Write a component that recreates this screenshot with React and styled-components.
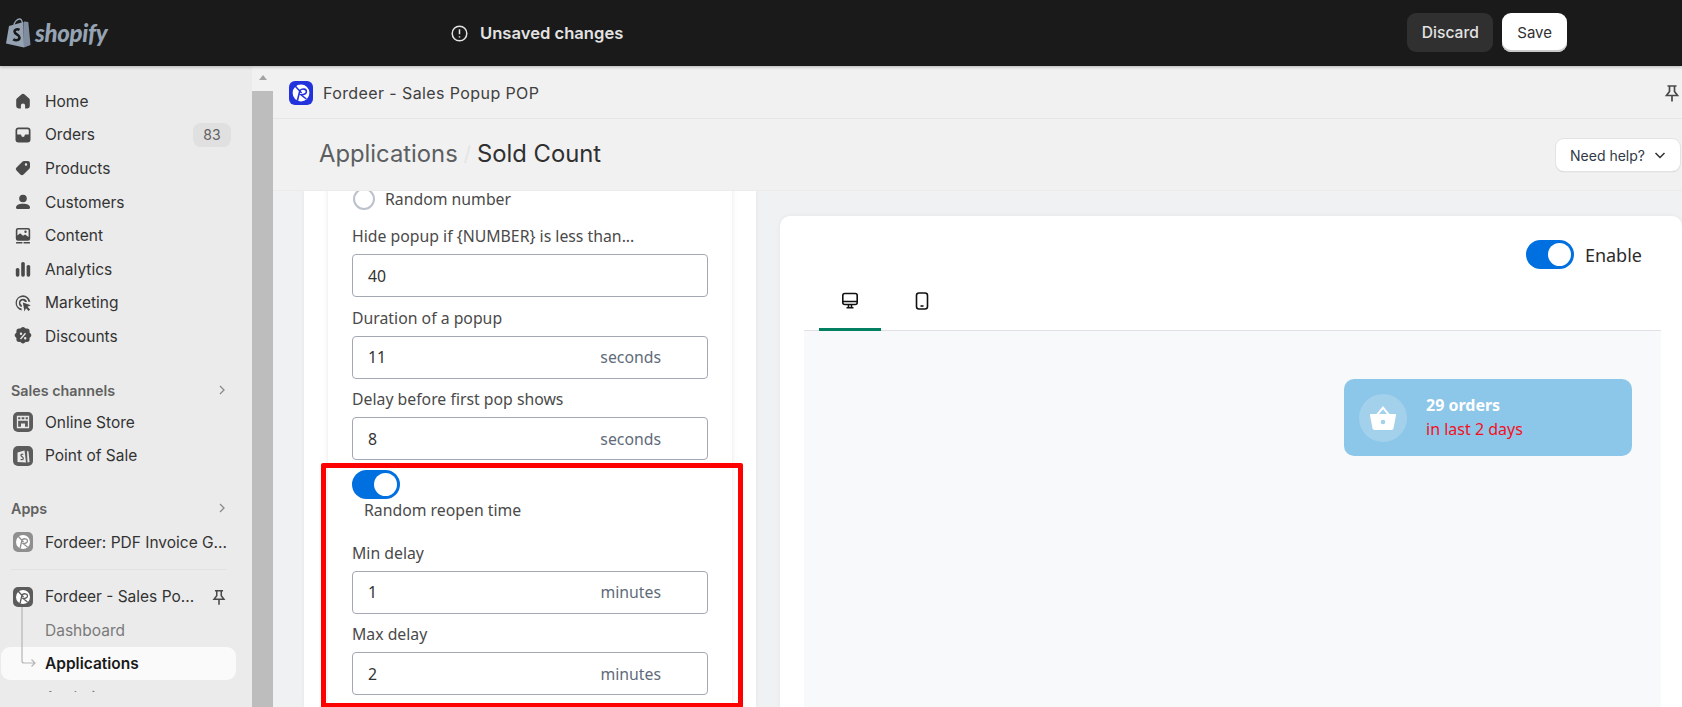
import styled, { createGlobalStyle } from "styled-components";

const GlobalStyle = createGlobalStyle`
  html, body { margin: 0; padding: 0; height: 100%; overflow: hidden; }
  * { box-sizing: border-box; }
  body { font-family: Inter, "Liberation Sans", sans-serif; color: #303030; }
`;

const Page = styled.div`
  display: flex;
  flex-direction: column;
  height: 707px;
  overflow: hidden;
  background: #f1f1f1;
`;

const TopBar = styled.header`
  flex: none;
  height: 66px;
  display: flex;
  align-items: center;
  background: #1a1a1a;
  padding-right: 115px;
  box-shadow: 0 1px 3px rgba(0, 0, 0, 0.25);
  position: relative;
  z-index: 2;
`;

const Logo = styled.div`
  width: 451px;
  display: flex;
  align-items: center;
  gap: 4px;
  padding-left: 5px;
`;

const LogoText = styled.span`
  font: italic 900 24px Lato, sans-serif;
  color: #95a3b3;
  letter-spacing: -0.3px;
  margin-top: -1px;
`;

const Unsaved = styled.div`
  display: flex;
  align-items: center;
  gap: 12px;
  font-size: 16.6px;
  font-weight: 600;
  color: #e3e3e3;
`;

const BarButtons = styled.div`
  margin-left: auto;
  margin-top: -1px;
  display: flex;
  gap: 9px;
`;

const BarButton = styled.button`
  height: 39px;
  border: 0;
  border-radius: 9px;
  padding: 0 ${({ $primary }) => ($primary ? 15 : 14.5)}px;
  font: ${({ $primary }) => ($primary ? "400 15px" : "500 15.6px")} Inter, sans-serif;
  color: ${({ $primary }) => ($primary ? "#303030" : "#e3e3e3")};
  background: ${({ $primary }) => ($primary ? "#fff" : "#303030")};
  box-shadow: ${({ $primary }) => ($primary ? "inset 0 -2px 0 #c9c9c9" : "none")};
`;

const Body = styled.div`
  flex: 1;
  min-height: 0;
  display: flex;
`;

const Sidebar = styled.aside`
  flex: none;
  width: 252px;
  background: #ebebeb;
`;

const SidebarNav = styled.nav`
  height: 626px;
  padding-top: 18.5px;
  overflow: hidden;
  position: relative;
`;

const NavRow = styled.div`
  height: ${({ $tall }) => ($tall ? "33.6px" : "33.5px")};
  margin: 0 16px 0 1px;
  padding: 0 5px 0 12px;
  display: flex;
  align-items: center;
  gap: 12px;
  font-size: 15.5px;
  font-weight: ${({ $active }) => ($active ? 600 : 400)};
  color: ${({ $active, $muted }) => ($active ? "#1a1a1a" : $muted ? "#7a7a7a" : "#333")};
  background: ${({ $active }) => ($active ? "#fafafa" : "transparent")};
  border-radius: 9px;
  white-space: nowrap;
  svg { flex: none; }
`;

const SubRow = styled(NavRow)`
  padding-left: 44px;
`;

const Badge = styled.span`
  margin-left: auto;
  width: 38px;
  height: 24px;
  border-radius: 8px;
  background: #e0e0e0;
  color: #616161;
  font-size: 14px;
  display: flex;
  align-items: center;
  justify-content: center;
`;

const SectionHead = styled.div`
  height: 24px;
  margin-top: ${({ $top }) => $top}px;
  margin-bottom: ${({ $bottom }) => $bottom}px;
  padding: 0 24px 0 11px;
  display: flex;
  align-items: center;
  justify-content: space-between;
  font-size: 14.3px;
  font-weight: 600;
  color: #616161;
`;

const Divider = styled.div`
  height: 1px;
  margin: 10px 25px 10px 11px;
  background: #e1e1e1;
`;

const TreeLine = styled.svg`
  position: absolute;
  left: 20px;
  top: 541px;
`;

const PinSlot = styled.span`
  margin-left: auto;
  margin-right: 3px;
  display: flex;
`;

const ScrollTrack = styled.div`
  flex: none;
  width: 21px;
  display: flex;
  flex-direction: column;
`;

const ScrollCap = styled.div`
  height: 25px;
  background: #f1f1f1;
  display: flex;
  justify-content: center;
  padding-top: 9px;
  &::before {
    content: "";
    border: 4px solid transparent;
    border-top: 0;
    border-bottom: 5px solid #a3a3a3;
    height: 0;
  }
`;

const ScrollThumb = styled.div`
  flex: 1;
  background: #bdbdbd;
`;

const Main = styled.main`
  flex: 1;
  min-width: 0;
  display: flex;
  flex-direction: column;
`;

const AppHeader = styled.div`
  flex: none;
  height: 53px;
  padding: 1px 0 0 16px;
  display: flex;
  align-items: center;
  gap: 10px;
  border-bottom: 1px solid #e6e6e6;
  font-size: 16px;
  letter-spacing: 0.4px;
  color: #404040;
  background: #f1f1f1;
`;

const PinEnd = styled.span`
  margin-left: auto;
  display: flex;
`;

const TitleBar = styled.div`
  flex: none;
  height: 72px;
  padding: 0 2px 2px 46px;
  display: flex;
  align-items: center;
  border-bottom: 1px solid #ebebeb;
  background: #f1f1f1;
  font-size: 23.8px;
`;

const Crumb = styled.span`
  color: #5c5f62;
`;

const CrumbSep = styled.span`
  color: #e4e4e4;
  margin: 0 6px;
  font-size: 20px;
`;

const CrumbCurrent = styled.span`
  color: #303030;
`;

const HelpButton = styled.button`
  margin-left: auto;
  margin-top: 3px;
  height: 32px;
  width: 124px;
  display: flex;
  align-items: center;
  justify-content: center;
  gap: 9px;
  border: 0;
  border-radius: 8px;
  background: #fff;
  font: 400 14px Inter, sans-serif;
  color: #303848;
  box-shadow: 0 0 0 1px #e3e3e3, 0 1px 1px #bbb;
`;

const Content = styled.div`
  flex: 1;
  min-height: 0;
  display: flex;
  gap: 24px;
  padding-left: 31px;
  overflow: hidden;
  background: #f0f1f3;
`;

const FormCard = styled.section`
  flex: none;
  width: 452px;
  padding: 0 24px;
  background: #fff;
  box-shadow: 0 0 4px rgba(0, 0, 0, 0.06);
`;

const FormInner = styled.div`
  margin-top: -4px;
  min-height: 560px;
  padding: 0 24px;
  box-shadow: 0 0 5px rgba(0, 0, 0, 0.1);
  font-family: "Noto Sans", sans-serif;
  font-size: 15.8px;
  color: #4a4a4a;
`;

const RadioRow = styled.div`
  display: flex;
  align-items: center;
  gap: 10px;
  height: 24px;
  margin-bottom: 15px;
  padding-left: 1px;
`;

const Radio = styled.span`
  width: 22px;
  height: 22px;
  border-radius: 50%;
  border: 2px solid #bcc2cc;
`;

const Field = styled.div`
  margin-bottom: 10.5px;
`;

const Label = styled.div`
  height: 24px;
  line-height: 21px;
  margin-bottom: 4px;
`;

const InputBox = styled.div`
  height: 43px;
  padding: 0 46px 0 15px;
  display: flex;
  align-items: center;
  justify-content: space-between;
  border: 1px solid #a4a8b3;
  border-radius: 4px;
  color: #333;
`;

const Suffix = styled.span`
  color: #5f6b7a;
`;

const ReopenGroup = styled.div`
  position: relative;
  padding-top: 10px;
  margin-top: -10.5px;
`;

const Toggle = styled.span`
  display: block;
  width: 48px;
  height: 29px;
  border-radius: 15px;
  background: #006fdf;
  position: relative;
  &::after {
    content: "";
    position: absolute;
    right: 3px;
    top: 3px;
    width: 23px;
    height: 23px;
    border-radius: 50%;
    background: #fff;
  }
`;

const ToggleLabel = styled.div`
  height: 24px;
  line-height: 22px;
  margin: 0 0 19.5px 12px;
`;

const RedFrame = styled.div`
  position: absolute;
  left: -31px;
  right: -35px;
  top: 3px;
  height: 245px;
  border: 5px solid #fe0000;
  border-radius: 2px;
  pointer-events: none;
`;

const PreviewCard = styled.section`
  flex: 1;
  min-width: 0;
  margin-top: 25px;
  padding: 24px 21px 0 24px;
  display: flex;
  flex-direction: column;
  background: #fff;
  border-radius: 10px 10px 0 0;
  box-shadow: 0 0 5px rgba(0, 0, 0, 0.05);
  font-family: "Noto Sans", sans-serif;
`;

const EnableRow = styled.div`
  display: flex;
  justify-content: flex-end;
  align-items: center;
  gap: 11px;
  height: 29px;
  padding-right: 19px;
  font-size: 18px;
  color: #2b2b2b;
`;

const Tabs = styled.div`
  height: 62px;
  padding: 0 0 0 15px;
  display: flex;
  gap: 10px;
  border-bottom: 1px solid #dfe0e8;
`;

const Tab = styled.div`
  width: 62px;
  height: 62px;
  padding-top: 4px;
  display: flex;
  align-items: center;
  justify-content: center;
  border-bottom: 3px solid ${({ $active }) => ($active ? "#008060" : "transparent")};
`;

const PreviewArea = styled.div`
  flex: 1;
  padding: 48px 29px 0 0;
  display: flex;
  justify-content: flex-end;
  align-items: flex-start;
  background: #f8f9fb;
`;

const Popup = styled.div`
  width: 288px;
  height: 77px;
  padding: 0 15px;
  display: flex;
  align-items: center;
  gap: 19px;
  border-radius: 10px;
  background: #8cc6e8;
`;

const PopupIcon = styled.div`
  width: 48px;
  height: 48px;
  border-radius: 50%;
  background: rgba(255, 255, 255, 0.2);
  display: flex;
  align-items: center;
  justify-content: center;
`;

const PopupText = styled.div`
  font-size: 16px;
  line-height: 24px;
  margin-top: -2px;
`;

const PopupTitle = styled.div`
  font-weight: 700;
  color: #fff;
`;

const PopupSub = styled.div`
  color: #f5101e;
`;

const Icon = ({ children, size = 20, color = "#4a4a4a" }) => (
  <svg width={size} height={size} viewBox="0 0 20 20" fill={color}>
    {children}
  </svg>
);

const HomeIcon = () => (
  <Icon>
    <path d="M8.700 3.200a2 2 0 0 1 2.600 0l4.600 4c.6.500.9 1.200.9 1.900v6a2.400 2.400 0 0 1-2.400 2.400h-2.300v-3a2.100 2.100 0 0 0-4.200 0v3H5.600a2.400 2.400 0 0 1-2.400-2.400v-6c0-.7.300-1.400.9-1.900z" />
  </Icon>
);

const OrdersIcon = () => (
  <Icon>
    <path fillRule="evenodd" d="M5.500 2.500h9a3 3 0 0 1 3 3v9a3 3 0 0 1-3 3h-9a3 3 0 0 1-3-3v-9a3 3 0 0 1 3-3zm0 1.700A1.300 1.300 0 0 0 4.200 5.500V9.500h3.300a.8.8 0 0 1 .8.700 1.700 1.700 0 0 0 3.400 0 .8.8 0 0 1 .8-.7h3.300v-4a1.300 1.300 0 0 0-1.300-1.300z" />
  </Icon>
);

const TagIcon = () => (
  <Icon>
    <path fillRule="evenodd" d="M11 3h3.700A2.300 2.300 0 0 1 17 5.300V9a2.500 2.500 0 0 1-.7 1.700l-5.800 5.800a2.200 2.200 0 0 1-3.100 0l-3.900-3.900a2.200 2.200 0 0 1 0-3.100l5.800-5.800A2.500 2.500 0 0 1 11 3zm2 4.700a1.200 1.200 0 1 0 0-2.400 1.200 1.200 0 0 0 0 2.400z" />
  </Icon>
);

const PersonIcon = () => (
  <Icon>
    <circle cx="10" cy="6.500" r="3.800" />
    <path d="M3 15.500c0-2.300 2.800-3.800 7-3.800s7 1.500 7 3.800a1.500 1.500 0 0 1-1.500 1.500h-11A1.500 1.500 0 0 1 3 15.500z" />
  </Icon>
);

const ContentIcon = () => (
  <Icon>
    <path fillRule="evenodd" d="M5 2h10a2.200 2.200 0 0 1 2.200 2.200v8.300a2.200 2.200 0 0 1-2.200 2.200H5a2.200 2.200 0 0 1-2.200-2.200V4.200A2.200 2.200 0 0 1 5 2zm.2 1.600a.8.800 0 0 0-.8.800v5.200l2.700-2.300 3 2.400 2-1.300 3.500 2.500V4.400a.8.800 0 0 0-.8-.8zM12.500 7a1.200 1.200 0 1 0 0-2.400 1.200 1.200 0 0 0 0 2.400z" />
    <rect x="3" y="16" width="6.500" height="1.600" rx=".5" />
    <rect x="10.500" y="16" width="6.500" height="1.600" rx=".5" />
  </Icon>
);

const AnalyticsIcon = () => (
  <Icon>
    <rect x="2.800" y="9" width="3.600" height="8.700" rx="1.600" />
    <rect x="8.200" y="3" width="3.600" height="14.700" rx="1.600" />
    <rect x="13.600" y="6" width="3.600" height="11.700" rx="1.600" />
  </Icon>
);

const MarketingIcon = () => (
  <Icon>
    <path d="M9.800 2.300a7.700 7.700 0 0 1 7.600 6.500h-2A5.800 5.800 0 1 0 8.600 15.500v2A7.700 7.700 0 0 1 9.800 2.300z" />
    <path d="M9.900 5.800a4.200 4.200 0 0 1 4.100 3.200h-2.200A2.300 2.300 0 1 0 8.800 12v2a4.200 4.200 0 0 1 1.100-8.200z" />
    <path d="M9.800 9.600l8 2.700-3.300 1.500 2.600 2.600-1.500 1.500-2.600-2.600-1.500 3.300z" />
  </Icon>
);

const DiscountIcon = () => (
  <Icon>
    <path fillRule="evenodd" d="M8 1.900a2.800 2.800 0 0 1 4 0l.7.700 1-.1a2.800 2.800 0 0 1 2.900 2.900l-.1 1 .8.800a2.800 2.800 0 0 1 0 4l-.8.800.1 1a2.800 2.800 0 0 1-2.900 2.900l-1-.1-.7.700a2.800 2.800 0 0 1-4 0l-.7-.7-1 .1a2.800 2.800 0 0 1-2.900-2.900l.1-1-.8-.8a2.800 2.800 0 0 1 0-4l.8-.8-.1-1a2.800 2.800 0 0 1 2.900-2.900l1 .1zm4 4.800L7 12.500l1 1 5-5.800zM8 6.500a1.200 1.200 0 1 0 0 2.400 1.200 1.200 0 0 0 0-2.400zm4.200 4.600a1.200 1.200 0 1 0 0 2.400 1.200 1.200 0 0 0 0-2.400z" />
  </Icon>
);

const StoreIcon = () => (
  <Icon>
    <rect width="20" height="20" rx="5" fill="#5c5c5c" />
    <path fill="none" stroke="#ebebeb" strokeWidth="1.300" d="M4.500 9V4.500h11V9M4.500 8h11M4.500 9v6.500h11V9M8 4.500V8M12 4.500V8" />
    <path fill="#ebebeb" d="M8 11.500h4v4H8z" />
  </Icon>
);

const PosIcon = () => (
  <Icon>
    <rect width="20" height="20" rx="5" fill="#5c5c5c" />
    <path fill="#ebebeb" d="M4.500 6.500l7-2 1.500 12-8.500-.5z" />
    <path fill="#ebebeb" d="M14 5l1.500.5 1 10.500-2 .5z" />
    <path fill="none" stroke="#5c5c5c" strokeWidth="1.300" d="M10.300 8.500c-1.500-.8-3 .2-2 1.500s2.200 1 2 2.500-1.800 1.200-2.700.8" />
  </Icon>
);

const FordeerIcon = ({ bg = "#5c5c5c", size = 20, radius = 5 }) => (
  <svg width={size} height={size} viewBox="0 0 20 20">
    <rect width="20" height="20" rx={radius} fill={bg} />
    <circle cx="10" cy="10" r="7" fill="#fff" />
    <path fill="none" stroke={bg} strokeWidth="1.300" d="M4.500 3.500l6 6.500M7 16.500L9 8c2-2 5.500-1.500 5.500.8S11.500 11.500 10 11.500L14.500 15" />
  </svg>
);

const PinIcon = ({ color = "#4a4a4a", size = 20 }) => (
  <svg width={size} height={size} viewBox="0 0 20 20" fill="none" stroke={color} strokeWidth="1.700">
    <path d="M5.500 3h9M7.500 3v5.500L4.500 12.500h11L12.500 8.500V3M10 12.500V18.500" />
  </svg>
);

const Chevron = () => (
  <svg width="12" height="12" viewBox="0 0 12 12" fill="none" stroke="#8a8a8a" strokeWidth="1.300">
    <path d="M4 2l4 4-4 4" />
  </svg>
);

const ShopifyBag = () => (
  <svg width="26" height="30" viewBox="0 0 26 30">
    <path fill="none" stroke="#95a3b3" strokeWidth="1.300" d="M9 7c.5-3 3-6 5.500-6 2 0 2.800 2 3 5" />
    <path fill="#95a3b3" d="M1 25.500L4 8l14.500-4L19 29.500z" />
    <path fill="#7f8d9e" d="M19 3.500l2.400.3 1.900.2L25.500 27 19 29.500z" />
    <path fill="none" stroke="#1a1a1a" strokeWidth="2.600" d="M14.500 11.800c-2-1.200-5-.5-5 1.800 0 2.800 5 2.800 5 6 0 2.800-3.500 3.300-6.300 1.700" />
  </svg>
);

const App = () => (
  <>
    <GlobalStyle />
    <Page>
      <TopBar>
        <Logo>
          <ShopifyBag />
          <LogoText>shopify</LogoText>
        </Logo>
        <Unsaved>
          <svg width="17" height="17" viewBox="0 0 17 17" fill="none" stroke="#e3e3e3" strokeWidth="1.500">
            <circle cx="8.500" cy="8.500" r="7.300" />
            <path d="M8.500 4.300v5M8.500 11.200v1.400" />
          </svg>
          Unsaved changes
        </Unsaved>
        <BarButtons>
          <BarButton>Discard</BarButton>
          <BarButton $primary>Save</BarButton>
        </BarButtons>
      </TopBar>
      <Body>
        <Sidebar>
          <SidebarNav>
            <NavRow $tall><HomeIcon />Home</NavRow>
            <NavRow $tall><OrdersIcon />Orders<Badge>83</Badge></NavRow>
            <NavRow $tall><TagIcon />Products</NavRow>
            <NavRow $tall><PersonIcon />Customers</NavRow>
            <NavRow $tall><ContentIcon />Content</NavRow>
            <NavRow $tall><AnalyticsIcon />Analytics</NavRow>
            <NavRow $tall><MarketingIcon />Marketing</NavRow>
            <NavRow $tall><DiscountIcon />Discounts</NavRow>
            <SectionHead $top={25} $bottom={3}>Sales channels<Chevron /></SectionHead>
            <NavRow><StoreIcon />Online Store</NavRow>
            <NavRow><PosIcon />Point of Sale</NavRow>
            <SectionHead $top={24} $bottom={5}>Apps<Chevron /></SectionHead>
            <NavRow><FordeerIcon bg="#8f8f8f" />Fordeer: PDF Invoice G...</NavRow>
            <Divider />
            <NavRow><FordeerIcon />Fordeer - Sales Po...<PinSlot><PinIcon size={18} /></PinSlot></NavRow>
            <SubRow $muted>Dashboard</SubRow>
            <SubRow $active>Applications</SubRow>
            <SubRow $muted>Analytics</SubRow>
            <TreeLine width="20" height="62" viewBox="0 0 20 62" fill="none" stroke="#b5b5b5" strokeWidth="1.200">
              <path d="M2 0v54a2 2 0 0 0 2 2h11M11.500 52.500L15 56l-3.500 3.500" />
            </TreeLine>
          </SidebarNav>
        </Sidebar>
        <ScrollTrack>
          <ScrollCap />
          <ScrollThumb />
        </ScrollTrack>
        <Main>
          <AppHeader>
            <FordeerIcon bg="#2233dd" size={24} radius={5} />
            Fordeer - Sales Popup POP
            <PinEnd><PinIcon size={20} /></PinEnd>
          </AppHeader>
          <TitleBar>
            <Crumb>Applications</Crumb>
            <CrumbSep>/</CrumbSep>
            <CrumbCurrent>Sold Count</CrumbCurrent>
            <HelpButton>
              Need help?
              <svg width="12" height="12" viewBox="0 0 12 12" fill="none" stroke="#303030" strokeWidth="1.500">
                <path d="M1.500 4l4.500 4.500L10.500 4" />
              </svg>
            </HelpButton>
          </TitleBar>
          <Content>
            <FormCard>
              <FormInner>
                <RadioRow><Radio />Random number</RadioRow>
                <Field>
                  <Label>{"Hide popup if {NUMBER} is less than..."}</Label>
                  <InputBox>40</InputBox>
                </Field>
                <Field>
                  <Label>Duration of a popup</Label>
                  <InputBox>11<Suffix>seconds</Suffix></InputBox>
                </Field>
                <Field>
                  <Label>Delay before first pop shows</Label>
                  <InputBox>8<Suffix>seconds</Suffix></InputBox>
                </Field>
                <ReopenGroup>
                  <Toggle />
                  <ToggleLabel>Random reopen time</ToggleLabel>
                  <Field>
                    <Label>Min delay</Label>
                    <InputBox>1<Suffix>minutes</Suffix></InputBox>
                  </Field>
                  <Field>
                    <Label>Max delay</Label>
                    <InputBox>2<Suffix>minutes</Suffix></InputBox>
                  </Field>
                  <RedFrame />
                </ReopenGroup>
              </FormInner>
            </FormCard>
            <PreviewCard>
              <EnableRow><Toggle />Enable</EnableRow>
              <Tabs>
                <Tab $active>
                  <svg width="20" height="20" viewBox="0 0 20 20" fill="none" stroke="#111" strokeWidth="1.600">
                    <rect x="2.800" y="2.500" width="14.400" height="11" rx="2" />
                    <path d="M3 10.500h14M8.500 13.500v3M11.500 13.500v3M6.500 16.800h7" />
                  </svg>
                </Tab>
                <Tab>
                  <svg width="20" height="20" viewBox="0 0 20 20" fill="none" stroke="#111" strokeWidth="1.600">
                    <rect x="4.500" y="2" width="11" height="16" rx="2.500" />
                    <path d="M8.500 15h3" />
                  </svg>
                </Tab>
              </Tabs>
              <PreviewArea>
                <Popup>
                  <PopupIcon>
                    <svg width="26" height="24" viewBox="0 0 26 24" fill="#fff">
                      <path d="M13 0l6.500 8h-2.600L13 3.300 9.100 8H6.500z" />
                      <path fillRule="evenodd" d="M1 8h24a1 1 0 0 1 1 1.200l-2.500 13a2 2 0 0 1-2 1.800h-17a2 2 0 0 1-2-1.800L0 9.200A1 1 0 0 1 1 8zm12 5.700a2.300 2.300 0 1 0 0 4.600 2.300 2.300 0 0 0 0-4.600z" />
                    </svg>
                  </PopupIcon>
                  <PopupText>
                    <PopupTitle>29 orders</PopupTitle>
                    <PopupSub>in last 2 days</PopupSub>
                  </PopupText>
                </Popup>
              </PreviewArea>
            </PreviewCard>
          </Content>
        </Main>
      </Body>
    </Page>
  </>
);

export default App;
